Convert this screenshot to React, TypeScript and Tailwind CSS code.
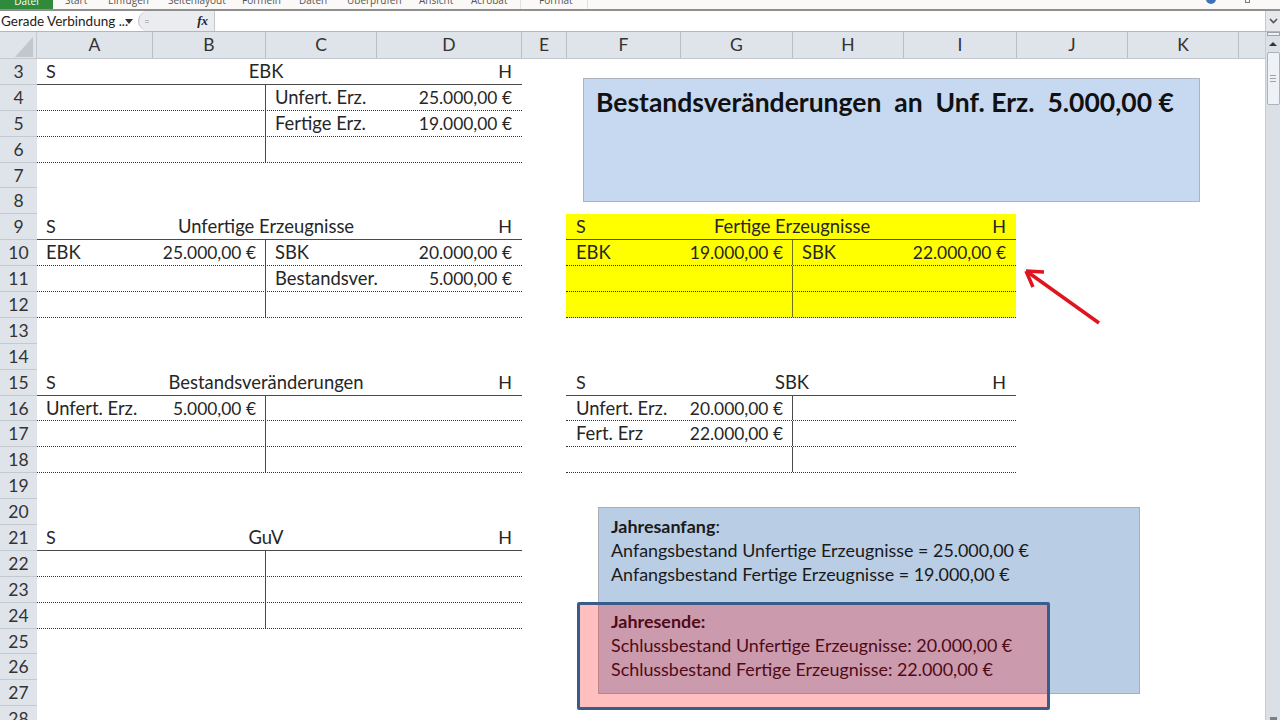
type Line = { l?: string; lv?: string; r?: string; rv?: string };
type Acc = { title: string; lines: Line[]; yellow?: boolean };

const columns = [
  { name: "A", w: "w-[116px]" },
  { name: "B", w: "w-[113px]" },
  { name: "C", w: "w-[111px]" },
  { name: "D", w: "w-[145px]" },
  { name: "E", w: "w-[45px]" },
  { name: "F", w: "w-[114px]" },
  { name: "G", w: "w-[112px]" },
  { name: "H", w: "w-[111px]" },
  { name: "I", w: "w-[113px]" },
  { name: "J", w: "w-[111px]" },
  { name: "K", w: "w-[111px]" },
];

const tabs = [
  { name: "Start", w: "w-[55px] pl-[12px]" },
  { name: "Einfügen", w: "w-[60px]" },
  { name: "Seitenlayout", w: "w-[74px]" },
  { name: "Formeln", w: "w-[57px]" },
  { name: "Daten", w: "w-[48px]" },
  { name: "Überprüfen", w: "w-[72px]" },
  { name: "Ansicht", w: "w-[52px]" },
  { name: "Acrobat", w: "w-[49px]" },
  { name: "Format", w: "w-[68px] pl-[18px] border-x border-[#e3e1de]" },
];

const left: Record<number, Acc> = {
  3: { title: "EBK", lines: [
    { r: "Unfert. Erz.", rv: "25.000,00 €" },
    { r: "Fertige Erz.", rv: "19.000,00 €" },
    {},
  ] },
  9: { title: "Unfertige Erzeugnisse", lines: [
    { l: "EBK", lv: "25.000,00 €", r: "SBK", rv: "20.000,00 €" },
    { r: "Bestandsver.", rv: "5.000,00 €" },
    {},
  ] },
  15: { title: "Bestandsveränderungen", lines: [
    { l: "Unfert. Erz.", lv: "5.000,00 €" },
    {},
    {},
  ] },
  21: { title: "GuV", lines: [{}, {}, {}] },
};

const right: Record<number, Acc> = {
  9: { title: "Fertige Erzeugnisse", yellow: true, lines: [
    { l: "EBK", lv: "19.000,00 €", r: "SBK", rv: "22.000,00 €" },
    {},
    {},
  ] },
  15: { title: "SBK", lines: [
    { l: "Unfert. Erz.", lv: "20.000,00 €" },
    { l: "Fert. Erz", lv: "22.000,00 €" },
    {},
  ] },
};

// finds what an account draws in a given sheet row
function Cell({ accounts, row, wide }: { accounts: Record<number, Acc>; row: number; wide: boolean }) {
  const width = wide ? "w-[485px]" : "w-[450px]";
  const headL = wide ? "w-[229px] pl-[9px]" : "w-[226px] pl-[10px]";
  const headR = wide ? "w-[256px]" : "w-[224px]";
  const lineL = wide ? "w-[229px] pl-[9px]" : "w-[227px] pl-[10px]";
  for (const key of Object.keys(accounts)) {
    const start = Number(key);
    const acc = accounts[start];
    const bg = acc.yellow ? "bg-[#ffff00]" : "";
    const rule = acc.yellow ? "border-[#6f6f20]" : "border-[#4a4a4a]";
    if (row === start) {
      return (
        <div className={`${width} ${bg} h-full flex border-b border-[#4a4a4a]`}>
          <div className={`${headL} flex`}>S</div>
          <div className="w-0 flex justify-center whitespace-nowrap text-[18.4px]">{acc.title}</div>
          <div className={`${headR} flex justify-end pr-[10px]`}>H</div>
        </div>
      );
    }
    if (row > start && row <= start + acc.lines.length) {
      const line = acc.lines[row - start - 1];
      return (
        <div className={`${width} ${bg} h-full flex border-b border-dotted border-[#333333]`}>
          <div className={`${lineL} flex justify-between items-baseline pr-[9px] border-r ${rule} whitespace-nowrap text-[18.4px]`}>
            <span>{line.l}</span>
            <span className="text-[17.4px]">{line.lv}</span>
          </div>
          <div className="flex-1 flex justify-between items-baseline pl-[9px] pr-[10px] whitespace-nowrap text-[18.4px]">
            <span>{line.r}</span>
            <span className="text-[17.4px]">{line.rv}</span>
          </div>
        </div>
      );
    }
  }
  return <div className={`${width} h-full`} />;
}

const rows = Array.from({ length: 26 }, (_, i) => i + 3);

export default function App() {
  return (
    <div className="relative w-[1280px] h-[720px] overflow-hidden bg-white text-[#262626] font-['Lato','Liberation_Sans',sans-serif]">
      {/* ribbon tabs, cut off by the top of the picture */}
      <div className="h-[9px] bg-[#fbf9f7] flex overflow-hidden text-[10px] leading-[10px] text-[#555555] font-['Open_Sans',sans-serif]">
        <div className="w-[53px] h-[13px] -mt-[4px] bg-[#2f8a3c] text-white text-center">Datei</div>
        {tabs.map((t) => (
          <div key={t.name} className={`${t.w} h-[14px] -mt-[5px] shrink-0`}>{t.name}</div>
        ))}
      </div>

      {/* formula bar */}
      <div className="h-[23px] flex items-center border-t-2 border-b border-t-[#8f8f8f] border-b-[#b4b6ba] bg-white">
        <div className="w-[125px] pl-px text-[13.5px] whitespace-nowrap text-[#222222]">Gerade Verbindung ...</div>
        <div className="w-0 h-0 border-x-[4px] border-x-transparent border-t-[5px] border-t-[#333333]" />
        <div className="ml-[5px] w-[76px] h-[20px] bg-[#eaecf0] rounded-l-[11px] border-l border-[#b9bdc4] flex items-center justify-between pl-[6px] pr-[4px]">
          <div className="w-[4px] h-[3px] border-y border-[#b5b9c0]" />
          <span className="font-['Liberation_Serif',serif] italic font-bold text-[13px] mr-[2px]">fx</span>
        </div>
        <div className="w-px h-[20px] bg-[#c4c7cc]" />
        <div className="flex-1" />
        <div className="w-[15px] h-[20px] bg-[#e6e8ec] flex items-center justify-center border-l border-[#c4c7cc]">
          <svg width="9" height="6" viewBox="0 0 9 6">
            <path d="M1 1 L4.5 4.5 L8 1" fill="none" stroke="#555" strokeWidth="1.6" />
          </svg>
        </div>
      </div>

      <div className="flex h-[688px]">
        <div className="w-[1265px]">
          {/* column letters */}
          <div className="flex h-[27px] bg-[#dfe3ea] border-b border-[#c4c8cf] text-[17.5px] leading-[26px] text-[#333333]">
            <div className="w-[37px] border-r border-[#c4c8cf] flex items-end">
              <svg width="36" height="26" viewBox="0 0 36 26">
                <path d="M33 5 V25 H15 Z" fill="#c3c7cd" />
              </svg>
            </div>
            {columns.map((c) => (
              <div key={c.name} className={`${c.w} text-center border-r border-[#b9bdc4]`}>{c.name}</div>
            ))}
          </div>
          {rows.map((row) => (
            <div key={row} className="flex h-[25.9px] text-[18px] leading-[25px]">
              <div className="w-[37px] h-full bg-[#dfe3ea] border-b border-[#c4c8cf] text-center text-[17.5px] text-[#333333]">{row}</div>
              <Cell accounts={left} row={row} wide />
              <div className="w-[44px]" />
              <Cell accounts={right} row={row} wide={false} />
            </div>
          ))}
        </div>

        {/* vertical scrollbar */}
        <div className="w-[15px] bg-[#dbdfe6] border-l border-[#c8ccd3] flex flex-col items-center">
          <div className="w-[13px] h-[4px] bg-[#eef0f3] border border-[#9ea3aa]" />
          <div className="w-0 h-0 mt-[6px] border-x-[4px] border-x-transparent border-b-[4px] border-b-[#333333]" />
          <div className="mt-[6px] w-[13px] h-[53px] bg-[#eef1f5] border border-[#aeb3ba] rounded-[2px] flex flex-col items-center justify-center gap-[2px]">
            <div className="w-[6px] h-px bg-[#9ea3aa]" />
            <div className="w-[6px] h-px bg-[#9ea3aa]" />
            <div className="w-[6px] h-px bg-[#9ea3aa]" />
          </div>
          <div className="mt-auto w-[7px] h-[3px] bg-[#7d8187]" />
        </div>
      </div>

      {/* window buttons peeking in at the top right */}
      <div className="absolute left-[1206px] -top-[6px] w-[10px] h-[10px] rounded-full bg-[#3b73b9]" />
      <div className="absolute left-[1245px] -top-[2px] w-[5px] h-[5px] border border-[#777777]" />

      {/* shapes lying over the sheet */}
      <div className="absolute left-[583px] top-[78px] w-[617px] h-[124px] bg-[#c6d9f1] border border-[#adb4bd] pl-[12px] pt-[7px] text-[26.5px] leading-[32px] font-bold text-[#111111] whitespace-pre">
        {"Bestandsveränderungen  an  Unf. Erz.  5.000,00 €"}
      </div>

      <div className="absolute left-[598px] top-[507px] w-[542px] h-[187px] bg-[#b9cde5] border border-[#a9afb8] pl-[12px] pt-[6px] text-[17.9px] leading-[24px] text-[#1a1a1a]">
        <p><b>Jahresanfang</b>:</p>
        <p>Anfangsbestand Unfertige Erzeugnisse = 25.000,00 €</p>
        <p>Anfangsbestand Fertige Erzeugnisse = 19.000,00 €</p>
      </div>

      <div className="absolute left-[577px] top-[602px] w-[473px] h-[108px] bg-[#ff0000]/25 border-[3px] border-[#385d8a] rounded-[2px] pl-[31px] pt-[4px] text-[17.9px] leading-[24px] text-[#4f0a18]">
        <p className="font-bold">Jahresende:</p>
        <p>Schlussbestand Unfertige Erzeugnisse: 20.000,00 €</p>
        <p>Schlussbestand Fertige Erzeugnisse: 22.000,00 €</p>
      </div>

      <svg className="absolute left-[1020px] top-[265px]" width="85" height="64" viewBox="0 0 85 64">
        <path d="M79 58 L9 8" fill="none" stroke="#e0141e" strokeWidth="3.5" />
        <path d="M6 6 L24 7 M6 6 L13 22" fill="none" stroke="#e0141e" strokeWidth="3.5" />
      </svg>
    </div>
  );
}
